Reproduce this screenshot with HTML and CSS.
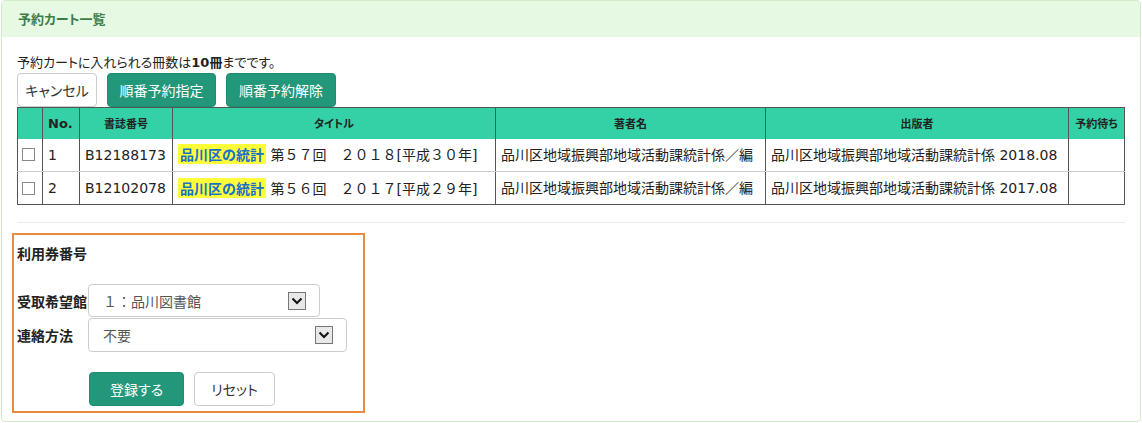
FILE: index.html
```html
<!DOCTYPE html>
<html lang="ja">
<head>
<meta charset="utf-8">
<title>予約カート一覧</title>
<link rel="stylesheet" href="styles.css">
</head>
<body>
<div class="panel">
  <div class="panel-head">予約カート一覧</div>
  <div class="panel-body">
    <p class="note">予約カートに入れられる冊数は<b>10冊</b>までです。</p>
    <div class="actions">
      <button class="btn btn-white btn-cancel">キャンセル</button>
      <button class="btn btn-teal btn-order">順番予約指定</button>
      <button class="btn btn-teal btn-order2">順番予約解除</button>
    </div>
    <table class="cart">
      <colgroup>
        <col class="c-chk"><col class="c-no"><col class="c-id"><col class="c-title"><col class="c-author"><col class="c-pub"><col class="c-wait">
      </colgroup>
      <thead>
        <tr>
          <th></th>
          <th class="th-no">No.</th>
          <th>書誌番号</th>
          <th>タイトル</th>
          <th>著者名</th>
          <th>出版者</th>
          <th>予約待ち</th>
        </tr>
      </thead>
      <tbody>
        <tr>
          <td><span class="chk"></span></td>
          <td>1</td>
          <td class="lat">B12188173</td>
          <td><span class="hl">品川区の統計</span> 第５７回　２０１８[平成３０年]</td>
          <td>品川区地域振興部地域活動課統計係／編</td>
          <td>品川区地域振興部地域活動課統計係 <span class="lat">2018.08</span></td>
          <td></td>
        </tr>
        <tr>
          <td><span class="chk"></span></td>
          <td>2</td>
          <td class="lat">B12102078</td>
          <td><span class="hl">品川区の統計</span> 第５６回　２０１７[平成２９年]</td>
          <td>品川区地域振興部地域活動課統計係／編</td>
          <td>品川区地域振興部地域活動課統計係 <span class="lat">2017.08</span></td>
          <td></td>
        </tr>
      </tbody>
    </table>
    <div class="sep"></div>
    <div class="form-box">
      <div class="form-title">利用券番号</div>
      <div class="form-grid">
        <div class="lbl">受取希望館</div>
        <div class="sel sel-lib"><span>１：品川図書館</span><span class="arrow"><svg width="12" height="8" viewBox="0 0 12 8"><path d="M1.5 1.5 L6 6 L10.5 1.5" fill="none" stroke="#111" stroke-width="2"/></svg></span></div>
        <div class="lbl">連絡方法</div>
        <div class="sel sel-contact"><span>不要</span><span class="arrow"><svg width="12" height="8" viewBox="0 0 12 8"><path d="M1.5 1.5 L6 6 L10.5 1.5" fill="none" stroke="#111" stroke-width="2"/></svg></span></div>
      </div>
      <div class="form-actions">
        <button class="btn btn-teal btn-submit">登録する</button>
        <button class="btn btn-white btn-reset">リセット</button>
      </div>
    </div>
  </div>
</div>
</body>
</html>
```

FILE: styles.css
```css
* { box-sizing: border-box; }
html, body { background: #fff; }
body {
  margin: 0;
  font-family: "Noto Sans CJK JP", sans-serif;
  font-feature-settings: "palt";
  color: #222;
}
.panel {
  width: 1140px;
  height: 422px;
  margin-left: 1px;
  border: 1px solid #d4ebcb;
  border-radius: 4px;
  overflow: hidden;
}
.panel-head {
  height: 36px;
  background: #e6f9e2;
  color: #3d7d4a;
  font-weight: bold;
  font-size: 13px;
  line-height: 36px;
  padding-left: 16px;
}
.panel-body {
  padding: 15px 15px 0 15px;
}
.note {
  margin: 0;
  font-size: 13px;
  line-height: 20px;
  height: 21px;
}
.note b { font-family: "DejaVu Sans", "Noto Sans CJK JP", sans-serif; font-size: 13px; }
.actions {
  display: flex;
  gap: 10px;
  height: 34px;
}
.btn {
  font-family: "Noto Sans CJK JP", sans-serif;
  font-feature-settings: "palt";
  font-size: 14px;
  height: 34px;
  border-radius: 4px;
  padding: 0;
  cursor: pointer;
  line-height: 1;
}
.btn-white { background: #fff; border: 1px solid #ccc; color: #333; }
.btn-teal { background: #22977a; border: 1px solid #1e8c70; color: #fff; }
.btn-cancel { width: 80px; }
.btn-order { width: 109px; }
.btn-order2 { width: 110px; }
table.cart {
  width: 1108px;
  border-collapse: collapse;
  table-layout: fixed;
  border: 1px solid #555;
  font-feature-settings: normal;
}
col.c-chk { width: 25px; }
col.c-no { width: 37px; }
col.c-id { width: 93px; }
col.c-title { width: 323px; }
col.c-author { width: 270px; }
col.c-pub { width: 303px; }
col.c-wait { width: 56px; }
.cart th {
  background: #33d1a5;
  height: 31px;
  font-size: 11px;
  font-weight: bold;
  color: #222;
  border-left: 1px solid #555;
  border-right: 1px solid #555;
  padding: 0;
  text-align: center;
  font-feature-settings: "palt";
}
.cart th.th-no {
  font-family: "DejaVu Sans", sans-serif;
  font-size: 13px;
  text-align: left;
  padding-left: 5px;
}
.cart td {
  height: 33px;
  font-size: 14px;
  font-family: "DejaVu Sans", "Noto Sans CJK JP", sans-serif;
  border-left: 1px solid #555;
  border-right: 1px solid #555;
  border-bottom: 1px solid #ccc;
  padding: 0 5px;
  white-space: nowrap;
  overflow: hidden;
  line-height: 20px;
}
.cart tbody tr:last-child td { border-bottom: 1px solid #555; }
.cart td .lat, .cart td.lat { font-family: "DejaVu Sans", sans-serif; }
.chk {
  display: block;
  width: 13px;
  height: 13px;
  border: 1px solid #888;
  background: #fff;
  margin-left: -1px;
}
.hl {
  background: #ffff3a;
  color: #1a6fc9;
  font-weight: bold;
  font-family: "Noto Sans CJK JP", sans-serif;
  padding: 0 2px;
}
.sep {
  height: 1px;
  background: #e8eee6;
  margin: 17px 0 10px 0;
  width: 1108px;
}
.form-box {
  width: 353px;
  height: 180px;
  margin-left: -5px;
  border: 2px solid #e98a3c;
  padding: 8px 16px 5px 3px;
}
.form-title {
  font-size: 14px;
  font-weight: bold;
  line-height: 20px;
}
.form-grid {
  display: grid;
  grid-template-columns: 71px auto;
  align-items: center;
  margin-top: 21px;
  row-gap: 1px;
}
.lbl {
  font-size: 14px;
  font-weight: bold;
  line-height: 20px;
}
.sel {
  display: flex;
  align-items: center;
  justify-content: space-between;
  border: 1px solid #ccc;
  border-radius: 4px;
  color: #555;
  font-size: 14px;
  padding: 0 13px 0 14px;
  font-feature-settings: normal;
}
.sel-lib { width: 232px; height: 33px; }
.sel-contact { width: 259px; height: 34px; }
.arrow {
  display: flex;
  align-items: center;
  justify-content: center;
  width: 18px;
  height: 18px;
  border: 1px solid #777;
  background: #e8e8e8;
}
.form-actions {
  display: flex;
  gap: 10px;
  margin-top: 20px;
  margin-left: 72px;
}
.btn-submit { width: 95px; }
.btn-reset { width: 81px; }
```
